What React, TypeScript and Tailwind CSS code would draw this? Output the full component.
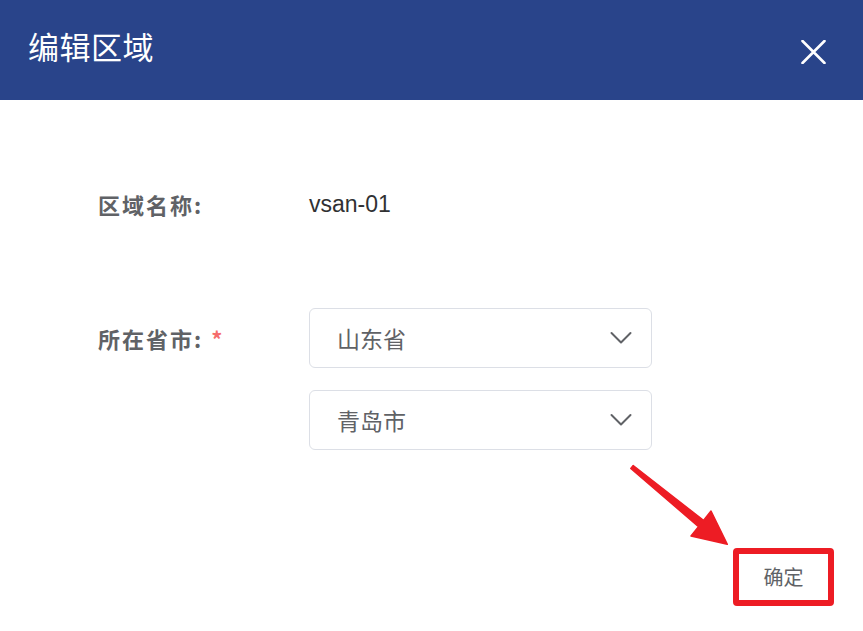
import React from "react";

const cjk = "font-['Noto_Sans_CJK_SC',sans-serif]";

function Chevron() {
  return (
    <svg width="22" height="14" viewBox="0 0 22 14" fill="none">
      <path d="M1.5 2 L11 11.5 L20.5 2" stroke="#606266" strokeWidth="2" strokeLinecap="round" strokeLinejoin="round" />
    </svg>
  );
}

function Select({ value }: { value: string }) {
  return (
    <div className="w-[343px] h-[60px] border border-[#dcdfe6] rounded-[6px] bg-white flex items-center justify-between pl-[27px] pr-[19px]">
      <span className={`${cjk} text-[23px] leading-[30px] text-[#606266]`}>{value}</span>
      <Chevron />
    </div>
  );
}

export default function App() {
  return (
    <div className="relative w-[863px] h-[631px] bg-white overflow-hidden">
      <div className="h-[100px] bg-[#29448a] flex items-start justify-between pl-[28px] pr-[37px]">
        <div className={`${cjk} mt-[24px] text-[31px] leading-[44px] tracking-[0.5px] text-white`}>编辑区域</div>
        <svg className="mt-[40px]" width="25" height="24" viewBox="0 0 25 24" fill="none">
          <path d="M1.5 1 L23.5 23 M23.5 1 L1.5 23" stroke="#ffffff" strokeWidth="2.6" strokeLinecap="round" />
        </svg>
      </div>

      <div className="pl-[98px]">
        <div className="pt-[90px] flex items-center">
          <div className={`${cjk} w-[211px] text-[22px] leading-[28px] font-bold text-[#606266] tracking-[2px]`}>区域名称:</div>
          <div className="font-['Liberation_Sans',sans-serif] text-[23px] leading-[28px] text-[#303133]">vsan-01</div>
        </div>

        <div className="mt-[90px] flex items-start">
          <div className={`${cjk} w-[211px] mt-[16px] text-[22px] leading-[28px] font-bold text-[#606266] tracking-[2px]`}>
            所在省市:<span className="ml-[8px] text-[#f56c6c] font-bold">*</span>
          </div>
          <div className="flex flex-col gap-[22px]">
            <Select value="山东省" />
            <Select value="青岛市" />
          </div>
        </div>
      </div>

      <div className="mt-[98px] flex justify-end pr-[29px]">
        <button className={`${cjk} w-[101px] h-[58px] border-[6px] border-[#ed1c24] rounded-[4px] bg-white text-[20px] text-[#606266] flex items-center justify-center`}>
          确定
        </button>
      </div>

      <svg className="absolute left-0 top-0 pointer-events-none" width="863" height="631">
        <polygon
          points="630.8,468.5 633.2,465.5 703.5,520.4 711,511 727.3,544.3 691,536 698.5,526.6"
          fill="#ed1c24"
          stroke="#ed1c24"
          strokeWidth="1.5"
          strokeLinejoin="round"
        />
      </svg>
    </div>
  );
}
